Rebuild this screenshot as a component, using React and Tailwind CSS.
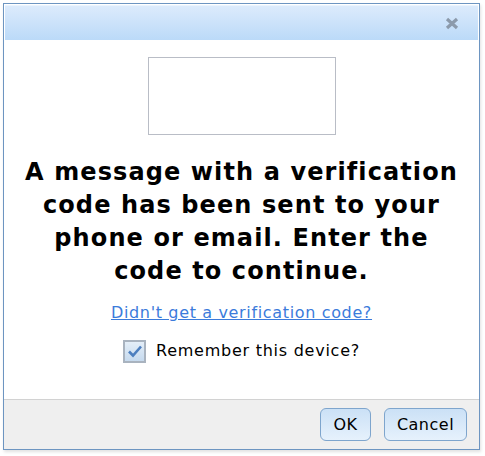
import React from "react";

const font = { fontFamily: '"DejaVu Sans", Verdana, sans-serif' };

const CloseIcon = () => (
  <svg width="14" height="13" viewBox="0 0 14 13">
    <path d="M2 2 L12 11 M12 2 L2 11" stroke="#8c9aab" strokeWidth="3.2" strokeLinecap="butt" />
  </svg>
);

const CheckBox = () => (
  <div className="w-[23px] h-[23px] border-2 border-[#a9b3bf] bg-gradient-to-b from-[#e4eef8] to-[#c6daee] flex items-center justify-center">
    <svg width="16" height="14" viewBox="0 0 16 14">
      <path d="M2 7.5 L6 11.5 L14 2.5" fill="none" stroke="#4d7fbf" strokeWidth="2.6" />
    </svg>
  </div>
);

export default function App() {
  return (
    <div className="w-[485px] h-[456px] bg-white pl-[3px] pt-[3px]" style={font}>
      <div className="w-[477px] h-[447px] border border-[#6d95c1] bg-white flex flex-col shadow-[1px_2px_3px_rgba(0,0,0,0.12)]">
        {/* header */}
        <div className="mx-px mt-px h-[35px] border-t border-[#eaf4fe] bg-gradient-to-b from-[#dcebfc] to-[#bbdaf8] flex items-center justify-end pr-[19px]">
          <CloseIcon />
        </div>

        {/* body */}
        <div className="flex-1 flex flex-col items-center">
          <div className="mt-[17px] w-[188px] h-[78px] border border-[#b9bdc6]" />
          <h1 className="mt-[21px] w-[445px] text-center text-[24px] leading-[33px] tracking-[1.1px] font-bold text-black">
            A message with a verification code has been sent to your phone or email. Enter the code to continue.
          </h1>
          <a href="#" className="mt-[15px] text-[16px] leading-[20px] tracking-[0.65px] text-[#3b7bdb] underline">
            Didn't get a verification code?
          </a>
          <label className="mt-[16px] flex items-center gap-[10px] text-[16px] tracking-[0.75px] text-black">
            <CheckBox />
            <span>Remember this device?</span>
          </label>
        </div>

        {/* footer */}
        <div className="h-[50px] bg-[#efefef] border-t border-[#d2d2d2] flex items-center justify-end gap-[13px] pr-[12px]">
          <button className="w-[51px] h-[33px] rounded-[6px] border border-[#7ea5cd] bg-gradient-to-b from-[#cbe1f6] to-[#e6f1fc] text-[16px] tracking-[0.5px] text-black">
            OK
          </button>
          <button className="w-[83px] h-[33px] rounded-[6px] border border-[#7ea5cd] bg-gradient-to-b from-[#cbe1f6] to-[#e6f1fc] text-[16px] tracking-[0.5px] text-black">
            Cancel
          </button>
        </div>
      </div>
    </div>
  );
}
